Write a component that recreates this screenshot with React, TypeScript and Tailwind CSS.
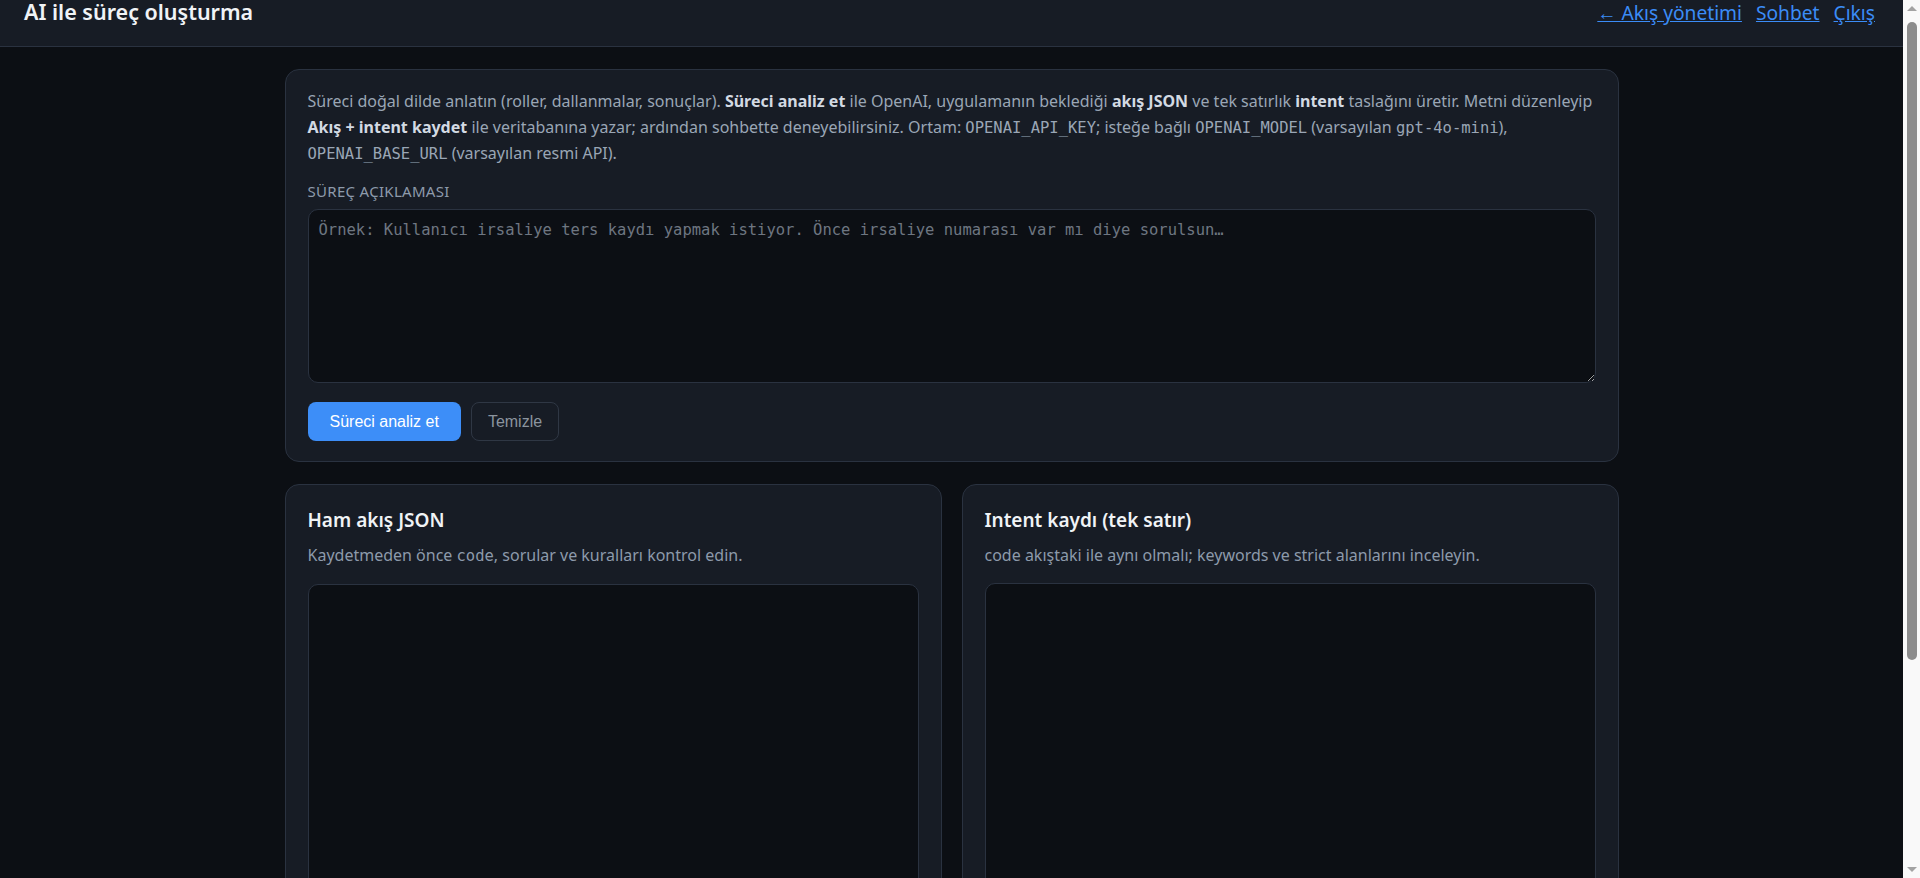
import { useState } from "react";

const sans = "font-['Noto_Sans','Open_Sans',sans-serif]";
const mono = "font-['DejaVu_Sans_Mono','Liberation_Mono',monospace]";

function Code({ children }: { children: string }) {
  return <code className={`${mono} text-[15.5px]`}>{children}</code>;
}

function JsonCard({ title, hint, value, onChange }: { title: string; hint: React.ReactNode; value: string; onChange: (v: string) => void }) {
  return (
    <section className="flex flex-col rounded-[14px] border border-[#2a3240] bg-[#171c25] p-[22px]">
      <h2 className="text-[19px] font-semibold leading-[26px] text-[#f0f3f6]">{title}</h2>
      <p className="mt-[10px] text-[16px] leading-[24px] text-[#8d9aab]">{hint}</p>
      <textarea
        value={value}
        onChange={(e) => onChange(e.target.value)}
        spellCheck={false}
        className={`${mono} mt-[16px] h-[480px] w-full resize-y rounded-[10px] border border-[#2a3240] bg-[#0c0f14] px-3 py-[10px] text-[15px] text-[#c9d1d9] outline-none`}
      />
    </section>
  );
}

// the page in the reference has a classic browser scrollbar on its right edge
function Scrollbar() {
  return (
    <div className="sticky top-0 flex h-[878px] w-[17px] shrink-0 flex-col items-center self-start bg-[#f9f9f9]">
      <div className="flex h-[17px] items-center justify-center">
        <div className="h-0 w-0 border-x-[5px] border-b-[5px] border-x-transparent border-b-[#a3a3a3]" />
      </div>
      <div className="mt-[5px] h-[638px] w-[10px] rounded-full bg-[#8c8c8c]" />
      <div className="flex-1" />
      <div className="flex h-[17px] items-center justify-center">
        <div className="h-0 w-0 border-x-[5px] border-t-[5px] border-x-transparent border-t-[#a3a3a3]" />
      </div>
    </div>
  );
}

export default function App() {
  const [desc, setDesc] = useState("");
  const [flow, setFlow] = useState("");
  const [intent, setIntent] = useState("");

  return (
    <div className={`${sans} flex min-h-screen bg-[#0c0f14] text-[#c9d1d9]`}>
      <div className="min-w-0 flex-1">
        <header className="flex h-[47px] items-start justify-between border-b border-[#2a3240] bg-[#171c25] pl-6 pr-7">
          <h1 className="text-[21.5px] font-semibold leading-[24px] text-[#f0f3f6]">AI ile süreç oluşturma</h1>
          <nav className="flex gap-[14px] text-[19.2px] leading-[26px] text-[#3b8cf7]">
            <a href="#" className="underline">← Akış yönetimi</a>
            <a href="#" className="underline">Sohbet</a>
            <a href="#" className="underline">Çıkış</a>
          </nav>
        </header>

        <main className="mx-auto flex w-[1334px] flex-col gap-[22px] pt-[22px] pb-[110px]">
          <section className="rounded-[14px] border border-[#2a3240] bg-[#171c25] px-[22px] pt-[19px] pb-[20px]">
            <p className="text-[16px] leading-[25.7px] text-[#9aa6b5]">
              Süreci doğal dilde anlatın (roller, dallanmalar, sonuçlar). <b className="font-bold text-[#d3dae3]">Süreci analiz et</b> ile OpenAI, uygulamanın beklediği{" "}
              <b className="font-bold text-[#d3dae3]">akış JSON</b> ve tek satırlık <b className="font-bold text-[#d3dae3]">intent</b> taslağını üretir. Metni düzenleyip
              <br />
              <b className="font-bold text-[#d3dae3]">Akış + intent kaydet</b> ile veritabanına yazar; ardından sohbette deneyebilirsiniz. Ortam: <Code>OPENAI_API_KEY</Code>; isteğe bağlı{" "}
              <Code>OPENAI_MODEL</Code> (varsayılan <Code>gpt-4o-mini</Code>),
              <br />
              <Code>OPENAI_BASE_URL</Code> (varsayılan resmi API).
            </p>

            <label className="mt-[13px] block text-[15px] uppercase leading-[20px] tracking-[0.02em] text-[#8d9aab]">Süreç açıklaması</label>
            <textarea
              value={desc}
              onChange={(e) => setDesc(e.target.value)}
              placeholder="Örnek: Kullanıcı irsaliye ters kaydı yapmak istiyor. Önce irsaliye numarası var mı diye sorulsun…"
              className={`${mono} mt-[8px] block h-[174px] w-full resize-y rounded-[10px] border border-[#2a3240] bg-[#0c0f14] px-[10px] py-[10px] text-[15.5px] leading-[20px] text-[#c9d1d9] outline-none placeholder:text-[#6e7681]`}
            />

            <div className="mt-[19px] flex gap-[10px] font-['Liberation_Sans',Arial,sans-serif] text-[16px]">
              <button className="h-[39px] rounded-[8px] bg-[#3d8ef8] px-[22px] text-white">Süreci analiz et</button>
              <button onClick={() => setDesc("")} className="h-[39px] rounded-[8px] border border-[#2f3744] px-[16px] text-[#8b949e]">
                Temizle
              </button>
            </div>
          </section>

          <div className="grid grid-cols-2 gap-5">
            <JsonCard
              title="Ham akış JSON"
              hint={<>Kaydetmeden önce <Code>code</Code>, sorular ve kuralları kontrol edin.</>}
              value={flow}
              onChange={setFlow}
            />
            <JsonCard
              title="Intent kaydı (tek satır)"
              hint={<>code akıştaki ile aynı olmalı; keywords ve strict alanlarını inceleyin.</>}
              value={intent}
              onChange={setIntent}
            />
          </div>
        </main>
      </div>
      <Scrollbar />
    </div>
  );
}
